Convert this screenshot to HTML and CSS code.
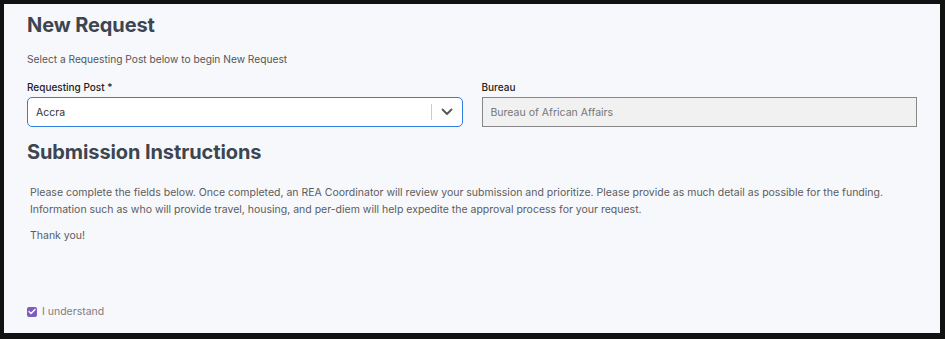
FILE: index.html
```html
<!DOCTYPE html>
<html lang="en">
<head>
<meta charset="utf-8">
<title>New Request</title>
<link rel="stylesheet" href="styles.css">
</head>
<body>
<div class="frame">
  <main class="page">
    <h1 class="title">New Request</h1>
    <p class="subtitle">Select a Requesting Post below to begin New Request</p>
    <div class="fields">
      <div class="field">
        <label class="label">Requesting Post *</label>
        <div class="select">
          <span class="select-value">Accra</span>
          <span class="select-sep"></span>
          <svg class="chev" width="12" height="8" viewBox="0 0 12 8"><path d="M1.5 1.5 L6 6 L10.5 1.5" fill="none" stroke="#555" stroke-width="1.8" stroke-linecap="round" stroke-linejoin="round"/></svg>
        </div>
      </div>
      <div class="field">
        <label class="label">Bureau</label>
        <div class="readonly">Bureau of African Affairs</div>
      </div>
    </div>
    <h2 class="title title2">Submission Instructions</h2>
    <div class="instructions">
      <p>Please complete the fields below. Once completed, an REA Coordinator will review your submission and prioritize. Please provide as much detail as possible for the funding. Information such as who will provide travel, housing, and per-diem will help expedite the approval process for your request.</p>
      <p>Thank you!</p>
    </div>
    <label class="check">
      <span class="box"><svg width="8" height="7" viewBox="0 0 8 7"><path d="M1 3.6 L3 5.4 L7 1.4" fill="none" stroke="#fff" stroke-width="1.4" stroke-linecap="round" stroke-linejoin="round"/></svg></span>
      <span class="check-text">I understand</span>
    </label>
  </main>
</div>
</body>
</html>
```
FILE: styles.css
```css
* { box-sizing: border-box; }
html, body { margin: 0; padding: 0; }
body {
  width: 945px;
  height: 339px;
  background: #000;
  font-family: "Inter", "Noto Sans", sans-serif;
  overflow: hidden;
}
.frame {
  width: 945px;
  height: 339px;
  background: #111;
  padding: 4px 5px 6px 4px;
}
.page {
  width: 936px;
  height: 329px;
  background: #f7f8fc;
  padding: 7px 23px 0 23px;
  position: relative;
}
.title {
  margin: 0;
  font-size: 20px;
  font-weight: 700;
  color: #3d4550;
  line-height: 28px;
  letter-spacing: -0.1px;
}
.subtitle {
  margin: 13px 0 0 0;
  font-size: 10.2px;
  color: #555;
  line-height: 14px;
}
.fields {
  display: flex;
  gap: 19px;
  margin-top: 14px;
}
.field { width: 436px; }
.label {
  display: block;
  font-size: 10px;
  font-weight: 500;
  color: #222;
  line-height: 14px;
  margin-bottom: 3px;
}
.select {
  height: 30px;
  border: 1.5px solid #2f7de1;
  border-radius: 5px;
  background: #fff;
  display: flex;
  align-items: center;
  padding-left: 8px;
}
.select-value {
  flex: 1;
  font-size: 10.5px;
  color: #333;
}
.select-sep {
  width: 1px;
  height: 16px;
  background: #ccc;
}
.chev { margin: 0 9px 0 9px; }
.readonly {
  height: 30px;
  border: 1px solid #888;
  background: #f1f1f1;
  display: flex;
  align-items: center;
  padding-left: 8px;
  font-size: 10.5px;
  color: #777;
}
.title2 { margin-top: 11px; }
.instructions {
  margin-top: 19px;
  padding-left: 3px;
  font-size: 10.5px;
  line-height: 16.5px;
  color: #5c5c5c;
}
.instructions p { margin: 0 0 10px 0; }
.check {
  position: absolute;
  left: 23px;
  top: 301px;
  display: flex;
  align-items: center;
  gap: 5px;
}
.box {
  width: 10px;
  height: 10px;
  border-radius: 2px;
  background: #7e5dc0;
  display: flex;
  align-items: center;
  justify-content: center;
}
.check-text {
  font-size: 10.5px;
  color: #808080;
}
```
